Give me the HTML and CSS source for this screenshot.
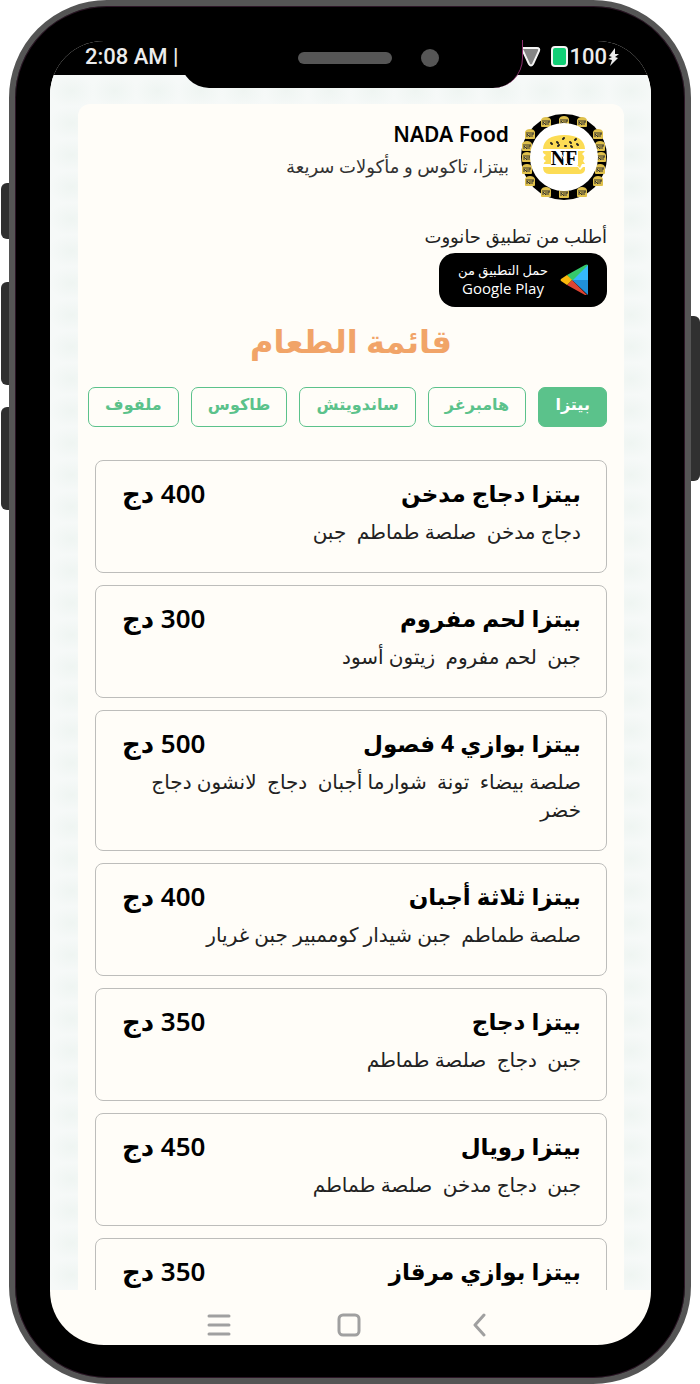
FILE: index.html
```html
<!DOCTYPE html>
<html lang="ar" dir="rtl">
<head>
<meta charset="utf-8">
<meta name="viewport" content="width=device-width, initial-scale=1">
<title>NADA Food</title>
<link rel="stylesheet" href="styles.css">
</head>
<body>
<div class="stage">
  <span class="side-key side-key-mute"></span>
  <span class="side-key side-key-up"></span>
  <span class="side-key side-key-down"></span>
  <span class="side-key side-key-power"></span>
  <div class="phone">
    <div class="notch"><span class="speaker"></span><span class="camera"></span></div>
    <div class="screen">
      <div class="status" dir="ltr">
        <span>2:08 AM |</span>
        <span class="status-icons">
          <svg width="22" height="22" viewBox="0 0 22 22"><path d="M3 2H17Q20 2 19 5L13 18Q11 21 9 18L3 5Q1 2 3 2Z" fill="#858585" stroke="#f4f4f4" stroke-width="2"/></svg>
          <svg class="battery" width="18" height="22" viewBox="0 0 18 22"><rect x="1" y="1" width="15" height="19" rx="3" fill="#12cf76" stroke="#f4f4f4" stroke-width="2"/></svg>
          <span>100</span>
          <svg width="13" height="20" viewBox="0 0 13 20"><path d="M8 1L2 9L5 10L1 12L5 13L3 19L11 11L8 10L12 7L8 7Z" fill="#ececec"/></svg>
        </span>
      </div>
      <main class="view">
        <div class="sheet">
          <header class="brand">
            <svg class="logo" viewBox="0 0 86 86" role="img" aria-label="NADA Food">
              <defs>
                <g id="mini"><path d="M-5 -2Q-4 -5 0 -5T5 -2V4Q5 5 4 5H-4Q-5 5 -5 4Z" fill="#dfc04b"/><path d="M-4 -1H4M-3 3V0L0 3V0M2 3V0H4" stroke="#333" fill="none"/></g>
              </defs>
              <circle cx="43" cy="43" r="43" fill="#000"/>
              <use href="#mini" x="25" y="8"/><use href="#mini" x="43" y="7"/><use href="#mini" x="61" y="8"/>
              <use href="#mini" x="9" y="20"/><use href="#mini" x="6" y="32"/><use href="#mini" x="6" y="43"/><use href="#mini" x="6" y="55"/><use href="#mini" x="9" y="67"/>
              <use href="#mini" x="77" y="20"/><use href="#mini" x="79" y="32"/><use href="#mini" x="80" y="43"/><use href="#mini" x="79" y="55"/><use href="#mini" x="77" y="67"/>
              <use href="#mini" x="25" y="78"/><use href="#mini" x="43" y="79"/><use href="#mini" x="61" y="78"/>
              <circle cx="43" cy="43" r="34" fill="#fff"/>
              <path d="M22 35Q23 21 43 21T64 35Z" fill="#fcdc55"/>
              <path d="M22 37H64L61 40Q65 43 62 47L64 50H61L59 54L55 50H23Q22 49 25 47Q20 44 25 41Q21 39 22 37Z" fill="#fcdc55"/>
              <path d="M22 53H57L59 56L62 53H64V56Q63 60 58 60H28Q22 60 22 53Z" fill="#fcdc55"/>
              <path d="M30 29L31 30M36 28L37 29M37 32L38 31M42 25L43 24M44 32H45M49 28L50 29M50 32L51 33M54 26L55 25M56 30L57 31" stroke="#222" stroke-width="2" stroke-linecap="round"/>
              <rect x="30" y="36" width="27" height="15" fill="#fff"/>
              <text x="43" y="51" class="logo-text" text-anchor="middle">NF</text>
              <path d="M38 36L47 51" stroke="#fff"/>
            </svg>
            <div class="brand-text">
              <h1 class="brand-name">NADA Food</h1>
              <p class="brand-tag">بيتزا، تاكوس و مأكولات سريعة</p>
            </div>
          </header>
          <p class="order">أطلب من تطبيق حانووت</p>
          <a class="store" href="#">
            <svg width="28" height="32" viewBox="0 0 28 32" aria-hidden="true"><path d="M28 1V16H11L7 11L25 1Q27 0 28 1Z" fill="#35c96b"/><path d="M28 1V17H12Z" fill="#35b8fb"/><path d="M12 16H28V31Z" fill="#2090d8"/><path d="M7 21L12 16L27 31Q26 31 25 31Z" fill="#dc4433"/><path d="M7 11L12 16L7 21L1 17Q0 16 1 15Z" fill="#fbb90c"/></svg>
            <span class="store-text"><span class="store-line">حمل التطبيق من</span><span class="store-name">Google Play</span></span>
          </a>
          <h2 class="menu-title">قائمة الطعام</h2>
          <nav class="tabs">
            <button class="tab tab-active" type="button">بيتزا</button>
            <button class="tab" type="button">هامبرغر</button>
            <button class="tab" type="button">ساندويتش</button>
            <button class="tab" type="button">طاكوس</button>
            <button class="tab" type="button">ملفوف</button>
          </nav>
          <div class="list">
            <article class="item"><div class="row"><h3>بيتزا دجاج مدخن</h3><span class="price">400 دج</span></div><p>دجاج مدخن &nbsp;صلصة طماطم &nbsp;جبن</p></article>
            <article class="item"><div class="row"><h3>بيتزا لحم مفروم</h3><span class="price">300 دج</span></div><p>جبن &nbsp;لحم مفروم &nbsp;زيتون أسود</p></article>
            <article class="item"><div class="row"><h3>بيتزا بوازي 4 فصول</h3><span class="price">500 دج</span></div><p>صلصة بيضاء &nbsp;تونة &nbsp;شوارما أجبان &nbsp;دجاج &nbsp;لانشون دجاج خضر</p></article>
            <article class="item"><div class="row"><h3>بيتزا ثلاثة أجبان</h3><span class="price">400 دج</span></div><p>صلصة طماطم &nbsp;جبن شيدار كوممبير جبن غريار</p></article>
            <article class="item"><div class="row"><h3>بيتزا دجاج</h3><span class="price">350 دج</span></div><p>جبن &nbsp;دجاج &nbsp;صلصة طماطم</p></article>
            <article class="item"><div class="row"><h3>بيتزا رويال</h3><span class="price">450 دج</span></div><p>جبن &nbsp;دجاج مدخن &nbsp;صلصة طماطم</p></article>
            <article class="item"><div class="row"><h3>بيتزا بوازي مرقاز</h3><span class="price">350 دج</span></div></article>
          </div>
        </div>
      </main>
      <div class="navbar" dir="ltr">
        <button type="button" aria-label="Menu"><svg width="24" height="24" viewBox="0 0 24 24"><path d="M2 3H22M2 12H22M2 21H22" class="stroke"/></svg></button>
        <button type="button" aria-label="Home"><svg width="24" height="24" viewBox="0 0 24 24"><rect x="2" y="2" width="20" height="20" rx="4" class="stroke"/></svg></button>
        <button type="button" aria-label="Back"><svg width="24" height="24" viewBox="0 0 24 24"><path d="M17 2L8 12L17 22" class="stroke"/></svg></button>
      </div>
    </div>
  </div>
</div>
</body>
</html>
```
FILE: styles.css
```css
* { box-sizing: border-box; }
body {
  margin: 0;
  background: #fff;
  color: #000;
  font-family: "Noto Sans", "DejaVu Sans", sans-serif;
}
h1, h2, h3, p { margin: 0; }
button { font-family: inherit; cursor: pointer; }

.stage {
  position: relative;
  height: 100vh;
  padding: 0 9px;
}
.side-key {
  position: absolute;
  left: 1px;
  width: 9px;
  background: #303030;
  border-radius: 6px 0 0 6px;
}
.side-key-mute { top: 183px; height: 56px; }
.side-key-up { top: 282px; height: 103px; }
.side-key-down { top: 407px; height: 103px; }
.side-key-power {
  top: 316px;
  left: auto;
  right: 0;
  height: 165px;
  border-radius: 0 6px 6px 0;
}
.phone {
  position: relative;
  height: 100%;
  padding: 35px 34px 33px 35px;
  background: #000;
  border: 6px solid #555;
  border-radius: 98px;
  box-shadow: inset 0 0 0 1px #2c1526;
}
.screen {
  display: flex;
  flex-direction: column;
  height: 100%;
  overflow: hidden;
  background: #fffdf8;
  border-radius: 54px;
}
.notch {
  position: absolute;
  z-index: 1;
  top: 34px;
  left: 166px;
  right: 162px;
  height: 48px;
  display: flex;
  direction: ltr;
  align-items: center;
  justify-content: center;
  gap: 29px;
  padding: 0 0 13px 34px;
  background: #000;
  border-right: 1px solid #8d2f6e;
  border-radius: 0 0 30px 28px;
}
.speaker { width: 94px; height: 12px; border-radius: 6px; background: #565656; }
.camera { width: 18px; height: 18px; border-radius: 50%; background: #565656; }

.status {
  flex: none;
  display: flex;
  align-items: center;
  justify-content: space-between;
  height: 34px;
  padding: 0 31px 2px 35px;
  background: #000;
  color: #ececec;
  font: 500 22px/30px Roboto, sans-serif;
}
.status-icons { display: flex; align-items: center; }
.battery { margin-left: 9px; }

.view {
  flex: 1;
  min-height: 0;
  overflow: hidden;
  padding: 29px 27px 0 28px;
  background:
    radial-gradient(ellipse at center, #eff5f2 0, #f6f9f8 75%) 0 0 / 43px 32px;
}
.sheet {
  padding: 10px 17px 24px 10px;
  background: #fffdf8;
  border-radius: 12px;
}
.brand { display: flex; gap: 12px; }
.logo { flex: none; width: 86px; height: 86px; }
.logo-text { font: 700 20px "Liberation Serif", serif; }
.brand-text { padding-top: 3px; }
.brand-name {
  font: 600 21px/34px "Noto Sans", sans-serif;
  direction: ltr;
  text-align: right;
}
.brand-tag { font-size: 18px; line-height: 30px; color: #333; }
.order { margin-top: 20px; font-size: 18px; line-height: 32px; color: #222; }
.store {
  display: flex;
  align-items: center;
  justify-content: center;
  gap: 12px;
  width: 168px;
  height: 54px;
  margin-top: 1px;
  border-radius: 16px;
  background: #000;
  color: #fff;
  text-decoration: none;
}
.store-text {
  display: flex;
  flex-direction: column;
  align-items: center;
}
.store-line { font-size: 13px; line-height: 16px; }
.store-name { font-family: "Open Sans", sans-serif; font-size: 15px; line-height: 20px; }
.menu-title {
  margin-top: 8px;
  padding-left: 7px;
  font-size: 32px;
  line-height: 52px;
  text-align: center;
  color: #f1a468;
}
.tabs { display: flex; gap: 12px; margin-top: 20px; }
.tab {
  flex: 1 1 auto;
  height: 40px;
  padding: 0 12px 6px;
  border: 1px solid #5bc28b;
  border-radius: 7px;
  background: transparent;
  color: #5bc28b;
  font-size: 16px;
  font-weight: 700;
  line-height: 28px;
  white-space: nowrap;
}
.tab-active { background: #5bc28b; color: #fff; }
.list {
  display: flex;
  flex-direction: column;
  gap: 12px;
  margin-top: 33px;
  padding-left: 7px;
}
.item {
  padding: 14px 25px 26px 26px;
  border: 1px solid #bdbdbb;
  border-radius: 8px;
}
.row {
  display: flex;
  justify-content: space-between;
  margin-bottom: 7px;
  line-height: 36px;
}
.row h3 { font-size: 23px; font-weight: 700; }
.price { font-size: 26px; font-weight: 600; }
.item p { font-size: 20px; line-height: 28px; color: #222; }

.navbar {
  flex: none;
  display: flex;
  align-items: center;
  justify-content: center;
  gap: 106px;
  height: 55px;
  padding: 15px 4px 0 0;
}
.navbar button {
  display: flex;
  padding: 0;
  border: 0;
  background: none;
}
.stroke {
  fill: none;
  stroke: #a0a0a0;
  stroke-width: 3;
  stroke-linecap: round;
  stroke-linejoin: round;
}
```
